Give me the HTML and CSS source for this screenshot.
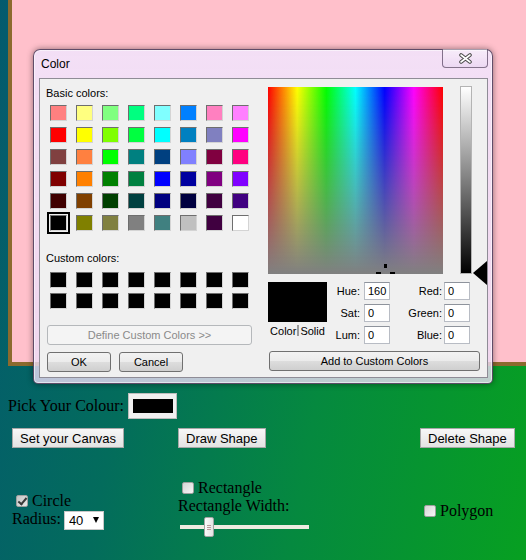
FILE: index.html
```html
<!DOCTYPE html>
<html lang="en">
<head>
<meta charset="utf-8">
<title>Shape Drawer</title>
<link rel="stylesheet" href="styles.css">
</head>
<body>
<div class="page">
  <div class="canvas"></div>

  <div class="dialog" role="dialog" aria-label="Color">
    <div class="titlebar">
      <span class="title">Color</span>
      <button class="close" aria-label="Close">
        <svg width="13" height="11" viewBox="0 0 13 11">
          <path d="M2 2 L11 9 M11 2 L2 9" stroke="#4a4a4a" stroke-width="3.6" stroke-linecap="round" fill="none"/>
          <path d="M2 2 L11 9 M11 2 L2 9" stroke="#ffffff" stroke-width="1.6" stroke-linecap="round" fill="none"/>
        </svg>
      </button>
    </div>
    <div class="client">
      <div class="left">
        <div class="lbl">Basic colors:</div>
        <div class="swatches basic">
          <span class="sw" style="background:#ff8080"></span><span class="sw" style="background:#ffff80"></span><span class="sw" style="background:#80ff80"></span><span class="sw" style="background:#00ff80"></span><span class="sw" style="background:#80ffff"></span><span class="sw" style="background:#0080ff"></span><span class="sw" style="background:#ff80c0"></span><span class="sw" style="background:#ff80ff"></span>
          <span class="sw" style="background:#ff0000"></span><span class="sw" style="background:#ffff00"></span><span class="sw" style="background:#80ff00"></span><span class="sw" style="background:#00ff40"></span><span class="sw" style="background:#00ffff"></span><span class="sw" style="background:#0080c0"></span><span class="sw" style="background:#8080c0"></span><span class="sw" style="background:#ff00ff"></span>
          <span class="sw" style="background:#804040"></span><span class="sw" style="background:#ff8040"></span><span class="sw" style="background:#00ff00"></span><span class="sw" style="background:#008080"></span><span class="sw" style="background:#004080"></span><span class="sw" style="background:#8080ff"></span><span class="sw" style="background:#800040"></span><span class="sw" style="background:#ff0080"></span>
          <span class="sw" style="background:#800000"></span><span class="sw" style="background:#ff8000"></span><span class="sw" style="background:#008000"></span><span class="sw" style="background:#008040"></span><span class="sw" style="background:#0000ff"></span><span class="sw" style="background:#0000a0"></span><span class="sw" style="background:#800080"></span><span class="sw" style="background:#8000ff"></span>
          <span class="sw" style="background:#400000"></span><span class="sw" style="background:#804000"></span><span class="sw" style="background:#004000"></span><span class="sw" style="background:#004040"></span><span class="sw" style="background:#000080"></span><span class="sw" style="background:#000040"></span><span class="sw" style="background:#400040"></span><span class="sw" style="background:#400080"></span>
          <span class="sw selected" style="background:#000000"></span><span class="sw" style="background:#808000"></span><span class="sw" style="background:#808040"></span><span class="sw" style="background:#808080"></span><span class="sw" style="background:#408080"></span><span class="sw" style="background:#c0c0c0"></span><span class="sw" style="background:#400040"></span><span class="sw" style="background:#ffffff"></span>
        </div>
        <div class="lbl custom-lbl">Custom colors:</div>
        <div class="swatches custom">
          <span class="sw"></span><span class="sw"></span><span class="sw"></span><span class="sw"></span><span class="sw"></span><span class="sw"></span><span class="sw"></span><span class="sw"></span>
          <span class="sw"></span><span class="sw"></span><span class="sw"></span><span class="sw"></span><span class="sw"></span><span class="sw"></span><span class="sw"></span><span class="sw"></span>
        </div>
        <button class="dbtn define" disabled>Define Custom Colors &gt;&gt;</button>
        <div class="okrow">
          <button class="dbtn small">OK</button>
          <button class="dbtn small">Cancel</button>
        </div>
      </div>
      <div class="right">
        <div class="pickers">
          <div class="spectrum">
            <svg class="cross" width="21" height="12" viewBox="0 0 21 12">
              <rect x="8" y="0" width="3" height="4" fill="#000"/>
              <rect x="0" y="8" width="5" height="2" fill="#000"/>
              <rect x="14" y="8" width="5" height="2" fill="#000"/>
            </svg>
          </div>
          <div class="lum"></div>
          <div class="arrow"></div>
        </div>
        <div class="details">
          <div class="preview-col">
            <div class="preview"></div>
            <div class="cap">Color<span class="sep"></span>Solid</div>
          </div>
          <div class="fields">
            <label class="fl">Hue:</label><input class="fi" value="160">
            <label class="fl fl2">Red:</label><input class="fi" value="0">
            <label class="fl">Sat:</label><input class="fi" value="0">
            <label class="fl fl2">Green:</label><input class="fi" value="0">
            <label class="fl">Lum:</label><input class="fi" value="0">
            <label class="fl fl2">Blue:</label><input class="fi" value="0">
          </div>
        </div>
        <button class="dbtn add">Add to Custom Colors</button>
      </div>
    </div>
  </div>

  <div class="controls">
    <div class="pick">
      <label for="colour">Pick Your Colour:</label> <input type="color" id="colour" class="colour" value="#000000">
    </div>
    <div class="shapes">
      <div><button class="btn">Set your Canvas</button></div>
      <div><button class="btn">Draw Shape</button></div>
      <div><button class="btn">Delete Shape</button></div>
      <div class="opt opt-circle">
        <label class="chk"><input type="checkbox" checked> Circle</label><br>
        <label for="radius">Radius:</label> <span class="sel"><select id="radius"><option>40</option></select></span>
      </div>
      <div class="opt">
        <label class="chk"><input type="checkbox"> Rectangle</label><br>
        <label for="rw">Rectangle Width:</label><br>
        <input type="range" id="rw" class="range" min="0" max="100" value="20">
      </div>
      <div class="opt opt-poly">
        <label class="chk"><input type="checkbox"> Polygon</label>
      </div>
    </div>
  </div>
</div>
</body>
</html>
```

FILE: styles.css
```css
html, body {
  margin: 0;
  height: 100%;
  overflow: hidden;
}
body {
  background: linear-gradient(100deg, #045a6e 0%, #036c5c 30%, #05893f 62%, #07a021 100%);
  font-family: "Liberation Serif", "Times New Roman", serif;
  font-size: 16px;
  color: #000;
}
.page {
  position: relative;
  padding-left: 8px;
  height: 100%;
}
.canvas {
  height: 362px;
  background: #ffc0cb;
  border-left: 4px solid #8c6a2e;
  border-bottom: 4px solid #8c6a2e;
}

/* ---------- Color dialog ---------- */
.dialog {
  position: absolute;
  left: 33px;
  top: 49px;
  width: 460px;
  height: 335px;
  box-sizing: border-box;
  border: 1px solid rgba(60, 40, 70, 0.8);
  border-radius: 7px 7px 5px 5px;
  padding: 0 4px 5px 5px;
  background: linear-gradient(180deg, rgba(242, 226, 250, 0.9) 0%, rgba(236, 220, 246, 0.8) 100%);
  box-shadow: 0 0 6px rgba(0, 0, 0, 0.45), inset 0 0 0 1px rgba(255, 255, 255, 0.55);
  font-family: "Liberation Sans", Arial, sans-serif;
  font-size: 11px;
  color: #000;
}
.titlebar {
  display: flex;
  justify-content: space-between;
  align-items: flex-start;
  height: 28px;
}
.title {
  line-height: 28px;
  padding-left: 2px;
  font-size: 12px;
}
.close {
  width: 46px;
  height: 19px;
  margin-top: -1px;
  padding: 0;
  box-sizing: border-box;
  border: 1px solid rgba(70, 50, 80, 0.65);
  border-top: none;
  border-radius: 0 0 4px 4px;
  background: linear-gradient(180deg, rgba(255, 255, 255, 0.45), rgba(230, 210, 240, 0.5));
  display: flex;
  align-items: center;
  justify-content: center;
}
.close svg { display: block; }
.client {
  height: 300px;
  box-sizing: border-box;
  border: 1px solid #8f8c96;
  background: #f0f0f0;
  display: flex;
  padding-top: 7px;
}
.left {
  width: 222px;
  flex: none;
  padding-left: 6px;
  box-sizing: border-box;
}
.lbl {
  line-height: 14px;
}
.swatches {
  display: grid;
  grid-template-columns: repeat(8, 17px);
  column-gap: 9px;
  row-gap: 6px;
  margin: 5px 0 0 4px;
}
.sw {
  display: block;
  width: 17px;
  height: 16px;
  box-sizing: border-box;
  border: 1px solid;
  border-color: #6e6e6e #d4d4d4 #d4d4d4 #6e6e6e;
  background: #000;
}
.sw.selected {
  box-shadow: 0 0 0 1px #f0f0f0, 0 0 0 3px #000;
}
.custom-lbl { margin-top: 20px; }
.swatches.custom {
  margin-top: 7px;
  row-gap: 5px;
}
.dbtn {
  display: block;
  box-sizing: border-box;
  height: 20px;
  padding: 0;
  border: 1px solid #707070;
  border-radius: 3px;
  background: linear-gradient(180deg, #f2f2f2 0%, #ebebeb 50%, #dddddd 51%, #cfcfcf 100%);
  font: 11px "Liberation Sans", Arial, sans-serif;
  color: #000;
}
.define {
  width: 205px;
  margin: 16px 0 0 1px;
  border-color: #b5b8bb;
  background: #f4f4f4;
  color: #8a8a8a;
}
.okrow {
  display: flex;
  gap: 8px;
  margin: 7px 0 0 1px;
}
.small { width: 64px; }

.right {
  margin-left: 6px;
  flex: none;
  width: 219px;
}
.pickers {
  display: flex;
  align-items: flex-start;
}
.spectrum {
  position: relative;
  width: 176px;
  height: 187px;
  margin-top: 1px;
  background:
    linear-gradient(180deg, rgba(128, 128, 128, 0) 0%, #808080 100%),
    linear-gradient(90deg, #ff0000 0%, #ffff00 16.67%, #00ff00 33.33%, #00ffff 50%, #0000ff 66.67%, #ff00ff 83.33%, #ff0000 100%);
}
.cross {
  position: absolute;
  left: 108px;
  top: 177px;
}
.lum {
  width: 12px;
  height: 188px;
  margin-left: 17px;
  box-sizing: border-box;
  border: 1px solid #b4b4b4;
  background: linear-gradient(180deg, #ffffff 0%, #000000 100%);
}
.arrow {
  width: 0;
  height: 0;
  margin: 175px 0 -11px 1px;
  border-top: 12px solid transparent;
  border-bottom: 12px solid transparent;
  border-right: 14px solid #000;
}
.details {
  display: flex;
  margin-top: 8px;
}
.preview-col { width: 59px; }
.preview {
  height: 40px;
  background: #000;
}
.cap {
  margin-top: 2px;
  line-height: 14px;
  text-align: center;
}
.sep {
  display: inline-block;
  width: 2px;
  height: 11px;
  background: #9a9a9a;
  vertical-align: -1px;
  margin: 0 1px;
}
.fields {
  display: grid;
  grid-template-columns: 37px 26px 54px 26px;
  grid-auto-rows: 18px;
  row-gap: 4px;
}
.fl {
  line-height: 18px;
  text-align: right;
  padding-right: 4px;
}
.fl2 { padding-right: 2px; }
.fi {
  box-sizing: border-box;
  width: 26px;
  height: 18px;
  margin: 0;
  padding: 0 0 0 3px;
  border: 1px solid #b8bcc4;
  border-top-color: #8e939c;
  background: #fff;
  font: 11px "Liberation Sans", Arial, sans-serif;
  color: #000;
}
.add {
  width: 211px;
  margin: 7px 0 0 1px;
}

/* ---------- page controls ---------- */
.controls {
  padding: 27px 0 0 4px;
}
.pick {
  margin-left: -4px;
  line-height: 18px;
}
.pick label { vertical-align: middle; }
.colour {
  -webkit-appearance: none;
  appearance: none;
  vertical-align: middle;
  box-sizing: border-box;
  width: 49px;
  height: 26px;
  margin: 0;
  padding: 5px 3px 5px 4px;
  border: 1px solid #bdbdbd;
  background: #f0f0f0;
}
.colour::-webkit-color-swatch-wrapper { padding: 0; }
.colour::-webkit-color-swatch { border: none; }
.shapes {
  display: grid;
  grid-template-columns: 166px 242px auto;
  row-gap: 31px;
  align-items: center;
  margin-top: 9px;
}
.btn {
  display: block;
  box-sizing: border-box;
  height: 20px;
  padding: 0 7px;
  border: 1px solid #a8a8a8;
  background: linear-gradient(180deg, #f7f7f7, #e3e3e3);
  font: 13px "Liberation Sans", Arial, sans-serif;
  color: #000;
}
.opt { line-height: 18px; }
.opt-circle { margin-top: 6px; }
.opt-poly { margin-top: 5px; }
.chk input {
  -webkit-appearance: none;
  appearance: none;
  position: relative;
  width: 12px;
  height: 12px;
  margin: 0 0 0 4px;
  box-sizing: border-box;
  border: 1px solid #a0a0a0;
  border-radius: 2px;
  background: linear-gradient(135deg, #d6d6d6, #f6f6f6);
  vertical-align: -1px;
}
.chk input:checked {
  background: linear-gradient(135deg, #c4c4c4, #e8e8e8);
}
.chk input:checked::after {
  content: "";
  position: absolute;
  left: 3px;
  top: 0;
  width: 3px;
  height: 7px;
  border: solid #3a3a3a;
  border-width: 0 2px 2px 0;
  transform: rotate(40deg);
}
.sel {
  position: relative;
  display: inline-block;
  vertical-align: middle;
  margin-left: -1px;
}
.sel select {
  -webkit-appearance: none;
  appearance: none;
  display: block;
  box-sizing: border-box;
  width: 40px;
  height: 19px;
  margin: 0;
  padding: 0 0 0 4px;
  border: 1px solid #c8c8c8;
  border-radius: 0;
  background: #fff;
  font: 13px "Liberation Sans", Arial, sans-serif;
  color: #000;
}
.sel::after {
  content: "";
  position: absolute;
  right: 5px;
  top: 6px;
  border-left: 3.5px solid transparent;
  border-right: 3.5px solid transparent;
  border-top: 6px solid #000;
  pointer-events: none;
}
.range {
  -webkit-appearance: none;
  appearance: none;
  display: block;
  width: 129px;
  height: 20px;
  margin: 2px 0 0 2px;
  background: transparent;
}
.range::-webkit-slider-runnable-track {
  height: 4px;
  background: #eeebe1;
}
.range::-webkit-slider-thumb {
  -webkit-appearance: none;
  appearance: none;
  width: 10px;
  height: 20px;
  margin-top: -8px;
  box-sizing: border-box;
  border: 1px solid #a4a4a4;
  border-radius: 2px;
  background:
    linear-gradient(#b89a9a, #b89a9a) center 7px / 4px 1px no-repeat,
    linear-gradient(#b89a9a, #b89a9a) center 9px / 4px 1px no-repeat,
    linear-gradient(#b89a9a, #b89a9a) center 11px / 4px 1px no-repeat,
    linear-gradient(90deg, #fafafa, #e4e4e4);
}
```
